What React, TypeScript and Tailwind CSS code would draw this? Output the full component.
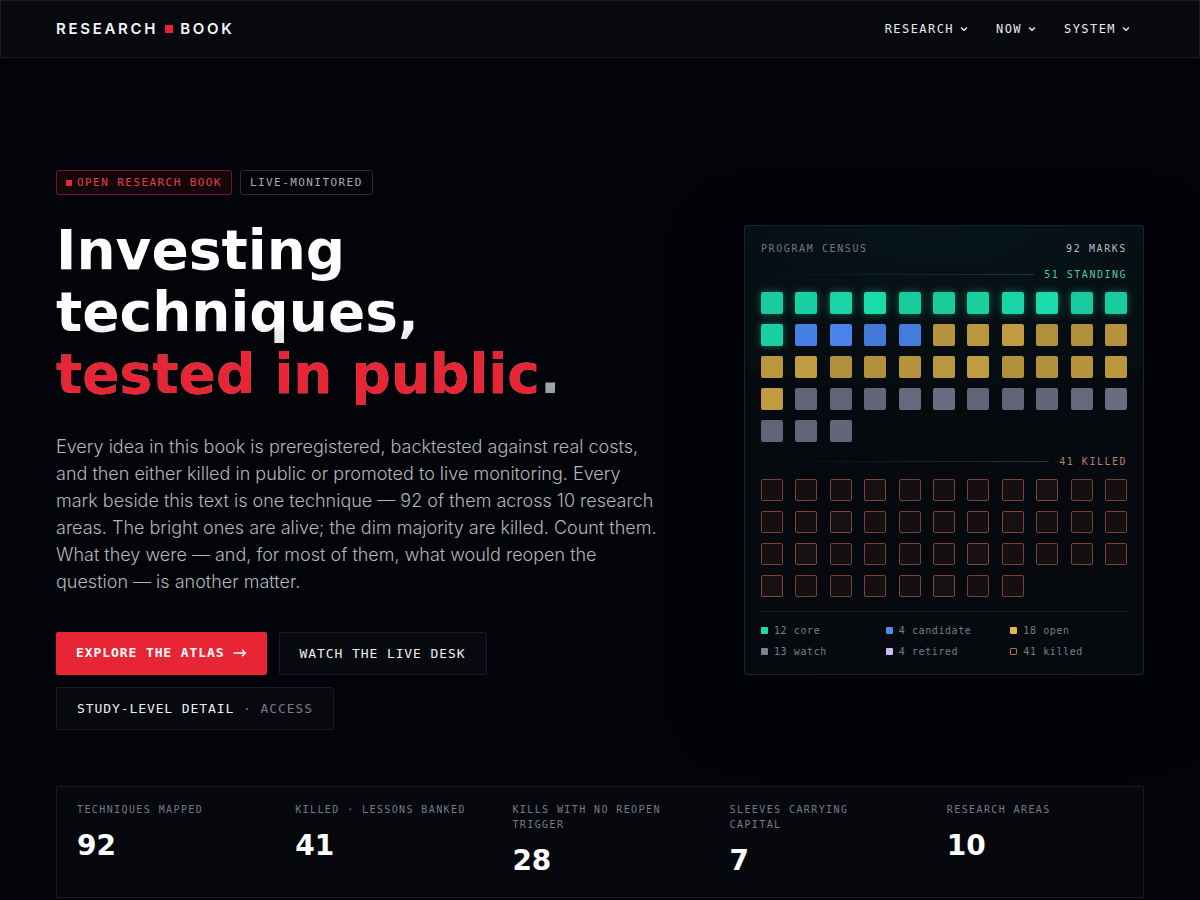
import React from 'react';

type MarkKind = 'core' | 'candidate' | 'open' | 'watch' | 'killed';

const NAV_ITEMS = ['Research', 'Now', 'System'];

const MARK_STYLES: Record<MarkKind, string> = {
    core: 'bg-[#1adbaa] shadow-[0_0_9px_rgba(27,224,174,0.45)]',
    candidate: 'bg-[#4983ec]',
    open: 'bg-[#c09b3f]',
    watch: 'bg-[#686c7f]',
    killed: 'border border-[#7c483d] bg-[#171012]',
};

// slight brightness drift so the wall of marks does not look flat
const MARK_FADES = ['opacity-93', 'opacity-95', 'opacity-97', 'opacity-100', 'opacity-92'];

const STANDING: { kind: MarkKind; count: number }[] = [
    { kind: 'core', count: 12 },
    { kind: 'candidate', count: 4 },
    { kind: 'open', count: 18 },
    { kind: 'watch', count: 13 },
];

const LEGEND = [
    { label: '12 core', swatch: 'bg-[#1ddcab]' },
    { label: '4 candidate', swatch: 'bg-[#4f8cf7]' },
    { label: '18 open', swatch: 'bg-[#e3b54b]' },
    { label: '13 watch', swatch: 'bg-[#7c8292]' },
    { label: '4 retired', swatch: 'bg-[#cdbdf5]' },
    { label: '41 killed', swatch: 'border border-[#b0705e]' },
];

const STATS = [
    { label: 'Techniques mapped', value: '92' },
    { label: 'Killed · lessons banked', value: '41' },
    { label: 'Kills with no reopen trigger', value: '28' },
    { label: 'Sleeves carrying capital', value: '7' },
    { label: 'Research areas', value: '10' },
];

const Header: React.FC = () => (
    <header className="border border-[#1b1c22] bg-[#08090e]">
        <div className="flex h-14 items-center justify-between px-[55px]">
            <a href="#" className="flex items-center gap-[7px] font-[Inter,sans-serif] text-[15px] font-semibold tracking-[0.18em] text-[#f4f5f7]">
                <span>RESEARCH</span>
                <span className="size-2 bg-[#e82535]" />
                <span>BOOK</span>
            </a>
            <nav className="flex">
                {NAV_ITEMS.map((item) => (
                    <button
                        key={item}
                        type="button"
                        className="flex items-center gap-1.5 px-3.5 text-xs tracking-[0.12em] text-[#e9eaee] uppercase"
                    >
                        {item}
                        <svg width="8" height="8" viewBox="0 0 8 8" fill="none" stroke="currentColor" strokeWidth="1.4">
                            <path d="M1 2.5L4 5.3L7 2.5" />
                        </svg>
                    </button>
                ))}
            </nav>
        </div>
    </header>
);

const Mark: React.FC<{ kind: MarkKind; index: number }> = ({ kind, index }) => (
    <span className={`size-[22px] rounded-xs ${MARK_STYLES[kind]} ${MARK_FADES[index % 5]}`} />
);

const GroupHead: React.FC<{ label: string; color: string }> = ({ label, color }) => (
    <div className="mt-[13px] mb-[11px] flex items-center gap-2.5">
        <span className="h-px flex-1 bg-linear-to-r from-transparent to-[#283239]" />
        <span className={`tracking-[0.15em] uppercase ${color}`}>{label}</span>
    </div>
);

const Census: React.FC = () => {
    const standing = STANDING.flatMap((g) => Array.from({ length: g.count }, () => g.kind));

    return (
        <aside className="rounded-xs border border-[#1a2428] bg-[#06090d] bg-[radial-gradient(110%_45%_at_50%_0%,#06151a_0%,#06090d_100%)] p-4 text-[10px] leading-[13px] shadow-[0_24px_70px_rgba(0,0,0,0.6)]">
            <div className="flex justify-between tracking-[0.16em] uppercase">
                <span className="text-[#737686]">Program census</span>
                <span className="text-[#b9bcc4]">92 marks</span>
            </div>

            <GroupHead label="51 standing" color="text-[#4fc8a4]" />
            <div className="grid grid-cols-[repeat(11,22px)] justify-between gap-y-2.5">
                {standing.map((kind, i) => (
                    <Mark key={i} kind={kind} index={i} />
                ))}
            </div>

            <GroupHead label="41 killed" color="text-[#b47f6c]" />
            <div className="grid grid-cols-[repeat(11,22px)] justify-between gap-y-2.5">
                {Array.from({ length: 41 }, (_, i) => (
                    <Mark key={i} kind="killed" index={i} />
                ))}
            </div>

            <ul className="mt-3.5 grid grid-cols-3 gap-2 border-t border-[#191d22] pt-3 tracking-[0.06em] text-[#7a7d8c]">
                {LEGEND.map((item) => (
                    <li key={item.label} className="flex items-center gap-1.5">
                        <span className={`size-[7px] rounded-[1px] ${item.swatch}`} />
                        {item.label}
                    </li>
                ))}
            </ul>
        </aside>
    );
};

const Hero: React.FC = () => (
    <section className="grid grid-cols-[1fr_400px] items-center gap-16">
        <div>
            <div className="flex gap-2 text-[11px] leading-[15px] tracking-[0.13em] uppercase">
                <span className="flex items-center gap-[5px] rounded-xs border border-[#6d1923] bg-[#15060b] px-[9px] py-1 text-[#e5404b]">
                    <span className="size-1.5 bg-[#e82535]" />
                    Open research book
                </span>
                <span className="rounded-xs border border-[#2a2b32] px-[9px] py-1 text-[#a9acb4]">Live-monitored</span>
            </div>

            <h1 className="mt-6 bg-linear-to-b from-white from-55% to-[#868b94] bg-clip-text font-['DejaVu_Sans',sans-serif] text-[55px] leading-[62px] font-bold text-transparent">
                Investing
                <br />
                techniques,
                <br />
                <em className="text-[#e82535] not-italic">tested in public</em>.
            </h1>

            <p className="mt-7 max-w-[608px] font-[Inter,sans-serif] text-[18px] leading-[27px] font-light text-[#b3b5bb]">
                Every idea in this book is preregistered, backtested against real costs, and then either killed in
                public or promoted to live monitoring. Every mark beside this text is one technique — 92 of them across
                10 research areas. The bright ones are alive; the dim majority are killed. Count them. What they were —
                and, for most of them, what would reopen the question — is another matter.
            </p>

            <div className="mt-[37px] flex flex-wrap gap-3 text-[13px] leading-[19px] tracking-[0.07em] uppercase">
                <a href="#" className="flex items-center gap-2 rounded-xs bg-[#e82535] px-5 pt-2.5 pb-3 font-bold text-white">
                    Explore the atlas
                    <svg width="14" height="10" viewBox="0 0 14 10" fill="none" stroke="currentColor" strokeWidth="1.5">
                        <path d="M0.5 5H12.5M9 1.8L12.3 5L9 8.2" />
                    </svg>
                </a>
                <a href="#" className="rounded-xs border border-[#1b1c23] bg-[#08090e] px-5 py-[11px] text-[#eeeff2]">
                    Watch the live desk
                </a>
                <a href="#" className="rounded-xs border border-[#1b1c23] bg-[#08090e] px-5 py-[11px] text-[#eeeff2]">
                    Study-level detail <span className="text-[#777a8c]">· Access</span>
                </a>
            </div>
        </div>

        <Census />
    </section>
);

const Stats: React.FC = () => (
    <dl className="mt-14 grid grid-cols-5 border border-[#18191f] bg-[#07080d]">
        {STATS.map((stat) => (
            <div key={stat.label} className="border-l border-[#0a0b10] px-5 pt-[15px] pb-4 first:border-l-0">
                <dt className="text-[10px] leading-[15px] tracking-[0.14em] text-[#777a8c] uppercase">{stat.label}</dt>
                <dd className="mt-[9px] font-['DejaVu_Sans',sans-serif] text-[28px] leading-10 font-bold text-white">
                    {stat.value}
                </dd>
            </div>
        ))}
    </dl>
);

const App: React.FC = () => (
    <div className="min-h-screen bg-[#030409] font-['DejaVu_Sans_Mono',monospace]">
        <Header />
        <main className="px-14 pt-28 pb-0.5">
            <Hero />
            <Stats />
        </main>
    </div>
);

export default App;
